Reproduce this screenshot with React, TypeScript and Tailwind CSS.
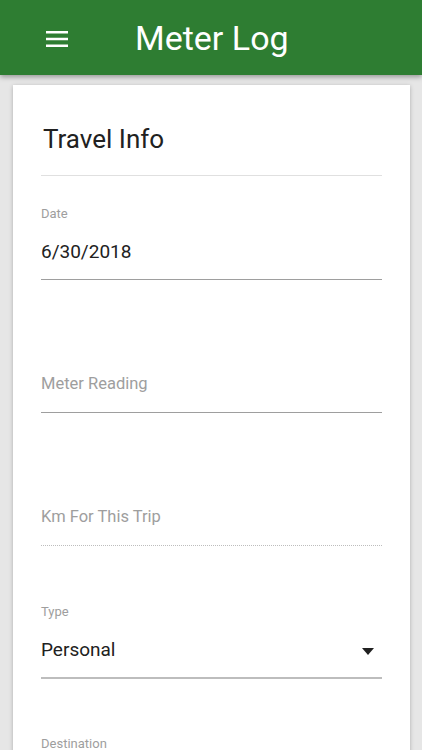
import { ReactNode } from "react";

function MenuIcon() {
  return (
    <svg width="22" height="16" viewBox="0 0 22 16" fill="#ffffff">
      <rect x="0" y="0" width="22" height="2.5" />
      <rect x="0" y="6.75" width="22" height="2.5" />
      <rect x="0" y="13.5" width="22" height="2.5" />
    </svg>
  );
}

// field with a small label above a value
function LabeledField({ label, value, right, border }: { label: string; value: string; right?: ReactNode; border: string }) {
  return (
    <div className={`flex h-[133px] flex-col justify-end ${border}`}>
      <div className="text-[13px] leading-4 text-[#9e9e9e]">{label}</div>
      <div className="mt-[18px] flex h-6 items-center justify-between text-[19px] leading-6 text-[#212121]">
        <span>{value}</span>
        {right}
      </div>
      <div className="h-[15px]" />
    </div>
  );
}

function EmptyField({ placeholder, border }: { placeholder: string; border: string }) {
  return (
    <div className={`flex h-[133px] flex-col justify-end ${border}`}>
      <div className="text-[16.5px] leading-[22px] text-[#9e9e9e]">{placeholder}</div>
      <div className="h-[17px]" />
    </div>
  );
}

export default function App() {
  return (
    <div className="h-[750px] overflow-hidden bg-[#e6e6e6] font-['Roboto',sans-serif]">
      <header className="relative z-10 flex h-[75px] items-center bg-[#2e7d32] shadow-[0_2px_5px_rgba(0,0,0,0.35)]">
        <div className="ml-[46px] mt-[2px]">
          <MenuIcon />
        </div>
        <h1 className="ml-[67px] text-[34px] leading-none text-white">Meter Log</h1>
      </header>

      <main className="ml-[13px] mr-[12px] mt-[10px] bg-white px-[28px] pt-[38px] shadow-[0_1px_4px_rgba(0,0,0,0.25)]">
        <h2 className="ml-[2px] text-[26px] leading-8 text-[#212121]">Travel Info</h2>
        <div className="mt-5 h-px bg-[#e0e0e0]" />

        <div className="-mt-[29px]">
          <LabeledField label="Date" value="6/30/2018" border="border-b border-[#9e9e9e]" />
        </div>
        <EmptyField placeholder="Meter Reading" border="border-b border-[#9e9e9e]" />
        <EmptyField placeholder="Km For This Trip" border="border-b border-dotted border-[#bdbdbd]" />
        <div className="-mb-px">
          <LabeledField
            label="Type"
            value="Personal"
            border="border-b-2 border-[#bdbdbd]"
            right={
              <svg width="12" height="7" viewBox="0 0 12 7" className="mr-[8px] mt-[2px]">
                <path d="M0 0 L12 0 L6 7 Z" fill="#212121" />
              </svg>
            }
          />
        </div>
        <div className="pt-[58px] text-[13px] leading-4 text-[#9e9e9e]">Destination</div>
        <div className="h-40" />
      </main>
    </div>
  );
}
